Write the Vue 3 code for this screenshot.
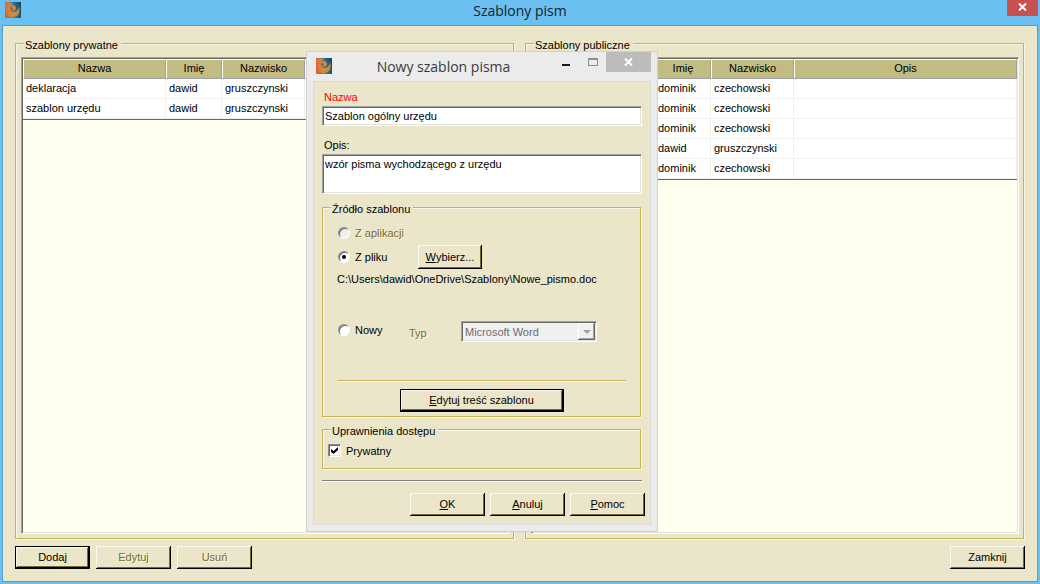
<script setup>
import { ref } from 'vue'

const privateRows = [
  { name: 'deklaracja', first: 'dawid', last: 'gruszczynski' },
  { name: 'szablon urzędu', first: 'dawid', last: 'gruszczynski' }
]
const publicRows = [
  { first: 'dominik', last: 'czechowski' },
  { first: 'dominik', last: 'czechowski' },
  { first: 'dominik', last: 'czechowski' },
  { first: 'dawid', last: 'gruszczynski' },
  { first: 'dominik', last: 'czechowski' }
]
const lists = [
  {
    title: 'Szablony prywatne',
    kind: 'private',
    headers: ['Nazwa', 'Imię', 'Nazwisko', ''],
    rows: privateRows
  },
  {
    title: 'Szablony publiczne',
    kind: 'public',
    headers: ['', 'Imię', 'Nazwisko', 'Opis'],
    rows: publicRows
  }
]

const name = ref('Szablon ogólny urzędu')
const description = ref('wzór pisma wychodzącego z urzędu')
const source = ref('file')
const isPrivate = ref(true)
</script>

<template>
  <div class="window">
    <header class="titlebar">
      <svg class="app-icon" viewBox="0 0 16 16" aria-hidden="true">
        <defs>
          <linearGradient id="icon-back" x1="0" y1="0.6" x2="1" y2="0.4">
            <stop offset="0" stop-color="#e4572f" />
            <stop offset="0.3" stop-color="#c9703c" />
            <stop offset="0.6" stop-color="#2f7096" />
            <stop offset="1" stop-color="#17495c" />
          </linearGradient>
          <linearGradient id="icon-swirl" x1="0" y1="0" x2="1" y2="0">
            <stop offset="0" stop-color="#d9703a" />
            <stop offset="0.5" stop-color="#cf8c42" />
            <stop offset="1" stop-color="#b98a42" />
          </linearGradient>
        </defs>
        <rect width="16" height="16" fill="url(#icon-back)" />
        <path d="M0 2 Q3 0 8 1 Q5 3 5 6 Q5 10 8 10 Q13 10 14 4 Q16 11 12 14 Q6 17 1 12Z" fill="url(#icon-swirl)" />
        <path d="M6 4 Q8 2 10 4 Q12 6 10 8 Q8 9 7 8 Q9 7 8 6 Q7 5 6 5Z" fill="#cf8c42" />
      </svg>
      <h1>Szablony pism</h1>
      <button class="close" type="button" aria-label="Zamknij okno">
        <svg viewBox="0 0 9 8" aria-hidden="true"><path d="M1 0.5 L8 7.5 M8 0.5 L1 7.5" /></svg>
      </button>
    </header>

    <main class="client">
      <div class="lists">
        <fieldset v-for="list in lists" :key="list.kind" class="group">
          <legend>{{ list.title }}</legend>
          <div class="listview">
            <table :class="list.kind">
              <colgroup>
                <col class="c-name" /><col class="c-first" /><col class="c-last" /><col />
              </colgroup>
              <thead>
                <tr><th v-for="(h, i) in list.headers" :key="i">{{ h }}</th></tr>
              </thead>
              <tbody>
                <tr v-for="(row, i) in list.rows" :key="i">
                  <td>{{ row.name }}</td><td>{{ row.first }}</td><td>{{ row.last }}</td><td></td>
                </tr>
              </tbody>
            </table>
          </div>
        </fieldset>
      </div>
      <footer class="actions">
        <button class="btn default" type="button">Dodaj</button>
        <button class="btn" type="button" disabled>Edytuj</button>
        <button class="btn" type="button" disabled>Usuń</button>
        <button class="btn last" type="button">Zamknij</button>
      </footer>
    </main>

    <section class="dialog" role="dialog" aria-labelledby="dialog-title">
      <header class="dialog-bar">
        <svg class="app-icon" viewBox="0 0 16 16" aria-hidden="true">
          <rect width="16" height="16" fill="url(#icon-back)" />
          <path d="M0 2 Q3 0 8 1 Q5 3 5 6 Q5 10 8 10 Q13 10 14 4 Q16 11 12 14 Q6 17 1 12Z" fill="url(#icon-swirl)" />
          <path d="M6 4 Q8 2 10 4 Q12 6 10 8 Q8 9 7 8 Q9 7 8 6 Q7 5 6 5Z" fill="#cf8c42" />
        </svg>
        <h2 id="dialog-title">Nowy szablon pisma</h2>
        <div class="caption-buttons">
          <button class="min" type="button" aria-label="Minimalizuj">
            <svg viewBox="0 0 8 2" aria-hidden="true"><rect width="8" height="2" fill="#1c1c1c" /></svg>
          </button>
          <button class="max" type="button" aria-label="Maksymalizuj" disabled>
            <svg viewBox="0 0 10 8" aria-hidden="true">
              <rect x="0.5" y="0.5" width="9" height="7" fill="none" stroke="#8c8c8c" />
              <rect width="10" height="2" fill="#8c8c8c" />
            </svg>
          </button>
          <button class="dialog-close" type="button" aria-label="Zamknij">
            <svg viewBox="0 0 9 8" aria-hidden="true"><path d="M1 0.5 L8 7.5 M8 0.5 L1 7.5" /></svg>
          </button>
        </div>
      </header>

      <form class="dialog-body" @submit.prevent>
        <label class="field-label required" for="tpl-name">Nazwa</label>
        <input id="tpl-name" v-model="name" class="sunken" type="text" />
        <label class="field-label" for="tpl-desc">Opis:</label>
        <textarea id="tpl-desc" v-model="description" class="sunken"></textarea>

        <fieldset class="group source">
          <legend>Źródło szablonu</legend>
          <label class="choice off">
            <input v-model="source" type="radio" name="source" value="app" disabled />Z aplikacji
          </label>
          <div class="row file-row">
            <label class="choice">
              <input v-model="source" type="radio" name="source" value="file" />Z pliku
            </label>
            <button class="btn browse" type="button"><span><u>W</u>ybierz...</span></button>
          </div>
          <p class="path">C:\Users\dawid\OneDrive\Szablony\Nowe_pismo.doc</p>
          <div class="row new-row">
            <label class="choice">
              <input v-model="source" type="radio" name="source" value="new" />Nowy
            </label>
            <label class="type-label" for="tpl-type">Typ</label>
            <div class="combo">
              <select id="tpl-type" disabled><option>Microsoft Word</option></select>
              <span class="drop" aria-hidden="true"></span>
            </div>
          </div>
          <hr class="gold" />
          <button class="btn default edit" type="button"><span><u>E</u>dytuj treść szablonu</span></button>
        </fieldset>

        <fieldset class="group access">
          <legend>Uprawnienia dostępu</legend>
          <label class="choice"><input v-model="isPrivate" type="checkbox" />Prywatny</label>
        </fieldset>

        <hr class="grey" />
        <div class="dialog-actions">
          <button class="btn" type="submit"><span><u>O</u>K</span></button>
          <button class="btn" type="button"><span><u>A</u>nuluj</span></button>
          <button class="btn" type="button"><span><u>P</u>omoc</span></button>
        </div>
      </form>
    </section>
  </div>
</template>

<style>
html,
body {
  margin: 0;
}
</style>

<style scoped>
* {
  box-sizing: border-box;
}
.window {
  position: relative;
  display: flex;
  flex-direction: column;
  height: 100vh;
  padding: 0 2px 2px;
  background: #69c0f1;
  color: #000;
  font: 11px/14px "Liberation Sans", Arial, sans-serif;
}
button,
input,
textarea,
select {
  font: inherit;
  color: inherit;
  margin: 0;
}
h1,
h2 {
  margin: 0;
  font: 14px/20px "Open Sans", "Noto Sans", sans-serif;
  text-align: center;
}
.titlebar {
  display: flex;
  height: 25px;
  padding: 0 0 0 3px;
}
.app-icon {
  flex: none;
  width: 16px;
  height: 16px;
}
.titlebar .app-icon {
  margin-top: 2px;
}
h1 {
  flex: 1;
  color: #14242e;
  padding: 1px 0 0 12px;
}
.close,
.dialog-close,
.min,
.max {
  display: flex;
  align-items: center;
  justify-content: center;
  border: 0;
  padding: 0;
  background: none;
}
.close {
  width: 31px;
  height: 16px;
  padding-bottom: 2px;
  background: #c75050;
}
.close svg,
.dialog-close svg {
  width: 9px;
  height: 8px;
  fill: none;
  stroke: #fff;
  stroke-width: 2;
}
.client {
  flex: 1;
  display: flex;
  flex-direction: column;
  min-height: 0;
  padding: 9px 12px 12px;
  border: 1px solid #559dc8;
  background: #ebe6c9;
}
.lists {
  flex: 1;
  min-height: 0;
  display: grid;
  grid-template-columns: 1fr 1fr;
  gap: 11px;
  margin-right: 1px;
}
.group {
  min-width: 0;
  margin: 0;
  border: 1px solid #c4b454;
  box-shadow: 1px 1px 0 #f9f6e8, inset 1px 1px 0 #f9f6e8;
}
legend {
  padding: 4px 3px 0 1px;
  line-height: 13px;
  background: #ebe6c9;
}
.lists .group {
  display: flex;
  flex-direction: column;
  padding: 5px 4px 4px 5px;
}
.lists legend {
  margin-left: 3px;
}
.listview {
  height: 100%;
  background: #ffffee;
  border: 1px solid;
  border-color: #a0a0a0 #fff #fff #a0a0a0;
  box-shadow: inset 1px 1px 0 #696969, inset -1px -1px 0 #e3e3e3;
  padding: 1px;
}
table {
  width: 100%;
  table-layout: fixed;
  border-collapse: separate;
  border-spacing: 0;
  border-bottom: 1px solid #696969;
}
.private .c-name {
  width: 143px;
}
.public .c-name {
  width: 122px;
}
.c-first {
  width: 56px;
}
.c-last {
  width: 83px;
}
th,
td {
  height: 20px;
  padding: 0 3px 2px;
  line-height: 16px;
  font-size: 11px;
  font-weight: 400;
  white-space: nowrap;
}
th {
  background: #c2bc82;
  border: 1px solid;
  border-color: #fff #a0a0a0 #a0a0a0 #fff;
}
td {
  background: #fff;
  border: 1px solid #f0f0f0;
  border-width: 0 1px 1px 0;
}
.actions {
  display: flex;
  gap: 6px;
  margin-top: 7px;
}
.last {
  margin-left: auto;
}
.btn {
  width: 75px;
  height: 23px;
  padding: 0 0 1px;
  border: 0;
  background: #ebe6c9;
  box-shadow: inset -1px -1px 0 #000, inset 1px 1px 0 #fbf9ef, inset -2px -2px 0 #766b2c;
}
.btn.default {
  border: 1px solid #000;
}
.btn:disabled {
  color: #766b2c;
  text-shadow: 1px 1px 0 #f9f6e8;
}
.dialog {
  position: absolute;
  left: 306px;
  top: 51px;
  width: 352px;
  padding: 0 6px 6px;
  border: 1px solid #d0d0d0;
  background: #ebebeb;
}
.dialog-bar {
  display: flex;
  height: 29px;
  padding-left: 3px;
}
.dialog-bar .app-icon {
  margin-top: 6px;
}
h2 {
  flex: 1;
  padding: 5px 0 0 3px;
  color: #3a3a3a;
}
.caption-buttons {
  display: flex;
  align-items: flex-start;
}
.min,
.max {
  width: 27px;
  height: 20px;
}
.min svg {
  width: 8px;
  height: 2px;
  margin-top: 6px;
}
.max svg {
  width: 10px;
  height: 8px;
}
.dialog-close {
  width: 45px;
  height: 20px;
  background: #bcbcbc;
}
.dialog-body {
  display: flex;
  flex-direction: column;
  padding: 8px;
  border: 1px solid #dcdcdc;
  background: #ebe6c9;
}
.dialog-body .group {
  margin-right: 1px;
}
.field-label {
  padding-left: 2px;
  margin-bottom: 2px;
}
.required {
  color: #f00;
}
.sunken {
  display: block;
  width: 100%;
  border: 1px solid;
  border-color: #a0a0a0 #fff #fff #a0a0a0;
  border-radius: 0;
  box-shadow: inset 1px 1px 0 #696969, inset -1px -1px 0 #e3e3e3;
  background: #fff;
  padding: 2px;
  outline: 0;
}
input.sunken {
  height: 20px;
  margin-bottom: 12px;
}
textarea.sunken {
  height: 40px;
  resize: none;
  overflow: hidden;
}
.source {
  display: flex;
  flex-direction: column;
  margin-top: 5px;
  padding: 10px 14px 4px;
}
.source legend {
  margin-left: -6px;
}
.access legend {
  margin-left: 3px;
}
.choice {
  display: inline-flex;
  align-items: center;
  gap: 5px;
}
.source .choice {
  padding-left: 1px;
}
.off {
  color: #766b2c;
  text-shadow: 1px 1px 0 #f9f6e8;
}
.choice input {
  appearance: none;
  display: grid;
  place-items: center;
  flex: none;
  width: 13px;
  height: 13px;
  border: 1px solid;
  border-color: #8c8c8c #fff #fff #8c8c8c;
  background: #fff;
}
.choice input[type="radio"] {
  width: 12px;
  height: 12px;
  border-radius: 50%;
  box-shadow: inset 1px 1px 0 #696969;
}
.choice input[type="radio"]:checked::before {
  content: "";
  width: 4px;
  height: 4px;
  border-radius: 50%;
  background: #000;
}
.choice input:disabled {
  background: #f0f0f0;
}
.choice input[type="checkbox"] {
  box-shadow: inset 1px 1px 0 #696969, inset -1px -1px 0 #e3e3e3;
}
.choice input[type="checkbox"]:checked::before {
  content: "";
  width: 7px;
  height: 7px;
  background: #000;
  clip-path: polygon(0 29%, 36% 57%, 100% 0, 100% 43%, 36% 100%, 0 71%);
}
.row {
  display: flex;
  align-items: center;
}
.file-row {
  margin-top: 5px;
}
.file-row .choice {
  width: 81px;
}
.browse {
  width: 64px;
  height: 24px;
}
.path {
  margin: 3px 0 0;
}
.new-row {
  margin-top: 35px;
}
.new-row .choice {
  width: 72px;
  padding-bottom: 4px;
}
.type-label {
  width: 52px;
  padding-top: 2px;
  color: #766b2c;
  text-shadow: 1px 1px 0 #f9f6e8;
}
.combo {
  display: grid;
  grid-template-columns: 1fr 19px;
  width: 136px;
  height: 21px;
}
.combo select {
  grid-area: 1 / 1 / 2 / 3;
  appearance: none;
  border: 1px solid;
  border-color: #a0a0a0 #fff #fff #a0a0a0;
  border-radius: 0;
  box-shadow: inset 1px 1px 0 #696969, inset -1px -1px 0 #e3e3e3;
  background: #f0f0f0;
  color: #6d6d6d;
  opacity: 1;
  padding: 0 20px 0 3px;
}
.drop {
  grid-area: 1 / 2;
  display: grid;
  place-items: center;
  margin: 2px 2px 2px 0;
  background: #f0f0f0;
  box-shadow: inset -1px -1px 0 #696969, inset 1px 1px 0 #fff, inset -2px -2px 0 #a0a0a0;
}
.drop::before {
  content: "";
  border: 4px solid transparent;
  border-top-color: #a0a0a0;
  border-bottom: 0;
}
hr {
  width: 100%;
  height: 2px;
  margin: 0;
  border: 0;
}
.gold {
  margin-top: 38px;
  border-top: 1px solid #c4b454;
  border-bottom: 1px solid #f9f6e8;
}
.edit {
  align-self: center;
  width: 164px;
  height: 23px;
  margin-top: 7px;
}
.access {
  margin-top: 4px;
  padding: 5px 5px 10px;
}
.grey {
  margin-top: 11px;
  border-top: 1px solid #808080;
  border-bottom: 1px solid #fff;
}
.dialog-actions {
  display: flex;
  justify-content: flex-end;
  gap: 5px;
  margin: 11px -3px 0 0;
}
</style>
